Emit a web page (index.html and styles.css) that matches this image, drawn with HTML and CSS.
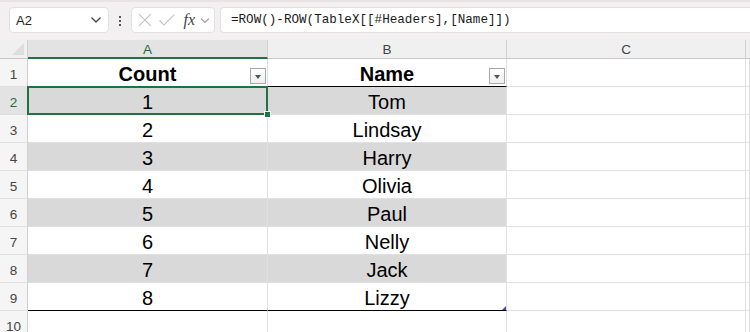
FILE: index.html
```html
<!DOCTYPE html>
<html lang="en">

<head>
  <meta charset="UTF-8">
  <meta name="viewport" content="width=device-width, initial-scale=1.0">
  <title>TableX</title>
  <link rel="stylesheet" href="styles.css">
</head>

<body>
  <div class="toolbar">
    <div class="namebox">
      <span>A2</span>
      <svg width="12" height="8" viewBox="0 0 12 8"><path d="M1.5 1.5 L6 6 L10.5 1.5" fill="none" stroke="#444" stroke-width="1.3"/></svg>
    </div>
    <div class="dots"><i></i><i></i><i></i></div>
    <div class="fxbox">
      <svg width="16" height="16" viewBox="0 0 16 16"><path d="M2 2 L14 14 M14 2 L2 14" stroke="#c4c4c4" stroke-width="1.2"/></svg>
      <svg width="18" height="16" viewBox="0 0 18 16"><path d="M1.5 8.5 L6 13 L16.5 2.5" fill="none" stroke="#c4c4c4" stroke-width="1.2"/></svg>
      <span class="fx">fx</span>
      <svg width="10" height="7" viewBox="0 0 10 7"><path d="M1 1.5 L5 5.5 L9 1.5" fill="none" stroke="#999" stroke-width="1.1"/></svg>
    </div>
    <div class="formula">=ROW()-ROW(TableX[[#Headers],[Name]])</div>
  </div>

  <div class="sheet">
    <div class="corner"></div>
    <div class="colhead active">A</div>
    <div class="colhead">B</div>
    <div class="colhead">C</div>
    <div class="colhead blank"></div>

    <div class="rowhead">1</div>
    <div class="cell th">Count<span class="filter"></span></div>
    <div class="cell th">Name<span class="filter"></span></div>
    <div class="cell"></div>
    <div class="cell"></div>

    <div class="rowhead active">2</div>
    <div class="cell band selected">1</div>
    <div class="cell band">Tom</div>
    <div class="cell"></div>
    <div class="cell"></div>

    <div class="rowhead">3</div>
    <div class="cell">2</div>
    <div class="cell">Lindsay</div>
    <div class="cell"></div>
    <div class="cell"></div>

    <div class="rowhead">4</div>
    <div class="cell band">3</div>
    <div class="cell band">Harry</div>
    <div class="cell"></div>
    <div class="cell"></div>

    <div class="rowhead">5</div>
    <div class="cell">4</div>
    <div class="cell">Olivia</div>
    <div class="cell"></div>
    <div class="cell"></div>

    <div class="rowhead">6</div>
    <div class="cell band">5</div>
    <div class="cell band">Paul</div>
    <div class="cell"></div>
    <div class="cell"></div>

    <div class="rowhead">7</div>
    <div class="cell">6</div>
    <div class="cell">Nelly</div>
    <div class="cell"></div>
    <div class="cell"></div>

    <div class="rowhead">8</div>
    <div class="cell band">7</div>
    <div class="cell band">Jack</div>
    <div class="cell"></div>
    <div class="cell"></div>

    <div class="rowhead">9</div>
    <div class="cell last">8</div>
    <div class="cell last corner-cell">Lizzy</div>
    <div class="cell"></div>
    <div class="cell"></div>

    <div class="rowhead">10</div>
    <div class="cell"></div>
    <div class="cell"></div>
    <div class="cell"></div>
    <div class="cell"></div>
  </div>
</body>

</html>
```

FILE: styles.css
```css
body {
  margin: 0;
  background: #fff;
  font-family: "Liberation Sans", Arial, sans-serif;
  color: #000;
}

/* formula bar strip */
.toolbar {
  display: flex;
  align-items: flex-start;
  height: 40px;
  box-sizing: border-box;
  padding: 7px 0 0 9px;
  background: #f2f0f0;
  border-top: 2px solid #e8e4e4;
}

.namebox,
.fxbox,
.formula {
  height: 26px;
  box-sizing: border-box;
  background: #fff;
  border: 1px solid #e2e0e0;
  border-radius: 4px;
  display: flex;
  align-items: center;
}

.namebox {
  width: 100px;
  padding: 0 6px 0 6px;
  justify-content: space-between;
  font-size: 13px;
  color: #222;
  margin-top: -2px;
}

.dots {
  width: 22px;
  height: 24px;
  display: flex;
  flex-direction: column;
  align-items: center;
  justify-content: center;
  gap: 2px;
}

.dots i {
  width: 2px;
  height: 2px;
  background: #555;
}

.fxbox {
  width: 84px;
  padding: 0 4px 0 5px;
  gap: 5px;
  margin-top: -2px;
}

.fx {
  font-family: "Liberation Serif", serif;
  font-style: italic;
  font-size: 16px;
  color: #444;
  margin-left: 3px;
}

.formula {
  flex: 1;
  margin-left: 5px;
  margin-top: -2px;
  border-right: none;
  border-radius: 4px 0 0 4px;
  padding-left: 10px;
  font-family: "Liberation Mono", monospace;
  font-size: 12.6px;
  color: #1a1a1a;
}

/* grid */
.sheet {
  display: grid;
  grid-template-columns: 28px 240px 239px 239px 1fr;
  grid-template-rows: 19px repeat(10, 28px);
}

.corner {
  background: #f0f0f0;
  border-right: 1px solid #d0d0d0;
  border-bottom: 1px solid #c8c8c8;
  position: relative;
}

.corner::after {
  content: "";
  position: absolute;
  right: 3px;
  bottom: 3px;
  border-left: 12px solid transparent;
  border-bottom: 12px solid #dedede;
}

.colhead {
  background: #f0f0f0;
  border-right: 1px solid #d0d0d0;
  border-bottom: 1px solid #c8c8c8;
  font-size: 13.5px;
  color: #444;
  display: flex;
  align-items: center;
  justify-content: center;
  box-sizing: border-box;
  padding-top: 1px;
}

.colhead.blank {
  border-right: none;
}

.colhead.active {
  background: #e3e3e3;
  color: #1d6b3e;
  border-bottom: 2px solid #1f7244;
}

.rowhead {
  background: #f5f5f5;
  border-right: 1px solid #d0d0d0;
  border-bottom: 1px solid #e0e0e0;
  font-size: 13.5px;
  color: #444;
  display: flex;
  align-items: center;
  justify-content: center;
  padding-top: 3px;
  box-sizing: border-box;
}

.rowhead.active {
  background: #e3e3e3;
  color: #1d6b3e;
}

.cell {
  position: relative;
  border-right: 1px solid #e0e0e0;
  border-bottom: 1px solid #e0e0e0;
  font-size: 20px;
  display: flex;
  align-items: center;
  justify-content: center;
  box-sizing: border-box;
  padding-top: 3px;
}

.cell.band {
  background: #d9d9d9;
}

.cell.th {
  font-weight: bold;
  border-bottom: 1px solid #000;
}

.cell.last {
  border-bottom: 1px solid #000;
}

/* header filter buttons */
.filter {
  position: absolute;
  right: 1px;
  bottom: 2px;
  width: 16px;
  height: 16px;
  box-sizing: border-box;
  border: 1px solid #a8a8a8;
  background: linear-gradient(#fff, #eef0f2);
}

.filter::after {
  content: "";
  position: absolute;
  left: 4px;
  top: 6px;
  border-left: 3px solid transparent;
  border-right: 3px solid transparent;
  border-top: 4px solid #555;
}

/* active cell outline */
.selected {
  z-index: 2;
}

.selected::before {
  content: "";
  position: absolute;
  left: -1px;
  top: -1px;
  right: -1px;
  bottom: -1px;
  border: 2px solid #1f7244;
}

.selected::after {
  content: "";
  position: absolute;
  right: -4px;
  bottom: -4px;
  width: 5px;
  height: 5px;
  background: #1f7244;
  border: 1px solid #fff;
}

/* table resize handle */
.corner-cell::after {
  content: "";
  position: absolute;
  right: 0;
  bottom: 0;
  border-left: 4px solid transparent;
  border-bottom: 4px solid #3b4fa8;
}
```
